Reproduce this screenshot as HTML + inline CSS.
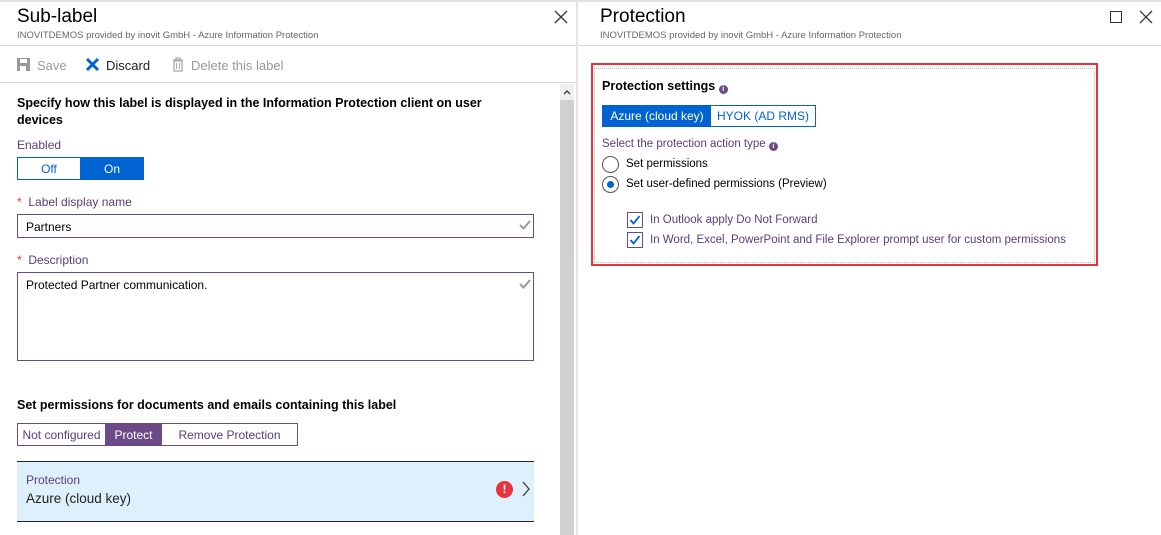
<!DOCTYPE html>
<html><head><meta charset="utf-8"><style>
*{box-sizing:border-box;margin:0;padding:0}
body{width:1161px;height:535px;overflow:hidden;background:#fff;font-family:"Liberation Sans",sans-serif;color:#000;position:relative}
.a{position:absolute;white-space:nowrap}
.pur{color:#5b3d78}
.i{display:inline-block;width:9px;height:9px;border-radius:50%;background:#6b4a87;color:#fff;font-size:7px;line-height:9px;text-align:center;font-weight:bold;vertical-align:-1px}
</style></head><body>
<div class="a" style="left:0;top:0;width:1161px;height:2px;background:#e4e4e4"></div>
<div class="a" style="left:17px;top:6px;font-size:19px">Sub-label</div>
<div class="a" style="left:17px;top:30px;font-size:9.5px;color:#666">INOVITDEMOS provided by inovit GmbH - Azure Information Protection</div>
<svg class="a" style="left:554px;top:10px" width="14" height="14"><path d="M1 1L13 13M13 1L1 13" stroke="#333" stroke-width="1.3"/></svg>
<div class="a" style="left:0;top:45px;width:577px;height:1px;background:#d8d8d8"></div>
<svg class="a" style="left:16px;top:57px" width="15" height="15"><path d="M1 1h13v13H1z" fill="#999"/><rect x="4" y="2" width="7" height="4" fill="#fff"/><rect x="4" y="9" width="6" height="5" fill="#fff"/></svg>
<div class="a" style="left:37px;top:58px;font-size:13px;color:#999">Save</div>
<svg class="a" style="left:85px;top:57px" width="15" height="15"><path d="M2 2L13 13M13 2L2 13" stroke="#0063d1" stroke-width="3"/></svg>
<div class="a" style="left:106px;top:58px;font-size:13px;color:#222">Discard</div>
<svg class="a" style="left:172px;top:57px" width="12" height="15"><path d="M1 3h10M4 3V1h4v2M2 4h8v10H2z" stroke="#aaa" fill="none" stroke-width="1.3"/><path d="M4.5 6v6M7.5 6v6" stroke="#aaa"/></svg>
<div class="a" style="left:191px;top:58px;font-size:13px;color:#999">Delete this label</div>
<div class="a" style="left:0;top:82px;width:577px;height:1px;background:#d8d8d8"></div>
<div class="a" style="left:560px;top:84px;width:14px;height:451px;background:#d0d0d0"></div>
<div class="a" style="left:560px;top:84px;width:14px;height:16px;background:#f0f0f0"></div>
<svg class="a" style="left:562px;top:88px" width="10" height="8"><path d="M2 6L5 3L8 6" stroke="#444" fill="none" stroke-width="1.5"/></svg>
<div class="a" style="left:576px;top:0;width:2px;height:535px;background:#e4e4e4"></div>
<div class="a" style="left:17px;top:95px;font-size:12.5px;font-weight:bold;line-height:17px;white-space:normal;width:500px">Specify how this label is displayed in the Information Protection client on user devices</div>
<div class="a pur" style="left:17px;top:138px;font-size:12px">Enabled</div>
<div class="a" style="left:17px;top:157px;width:127px;height:23px;border:1px solid #0063d1;font-size:12px">
<div class="a" style="left:0;top:0;width:62px;height:21px;color:#0063d1;text-align:center;line-height:22px">Off</div>
<div class="a" style="left:62px;top:0;width:64px;height:21px;background:#0063d1;color:#fff;text-align:center;line-height:22px">On</div></div>
<div class="a pur" style="left:17px;top:195px;font-size:12px"><span style="color:#e8323c">*</span>&nbsp; Label display name</div>
<div class="a" style="left:17px;top:214px;width:517px;height:24px;border:1px solid #6b4a87;font-size:12px;padding:5px 8px">Partners</div>
<svg class="a" style="left:519px;top:220px" width="12" height="10"><path d="M1 5l3.5 3.5L11 1" stroke="#999" fill="none" stroke-width="2"/></svg>
<div class="a pur" style="left:17px;top:253px;font-size:12px"><span style="color:#e8323c">*</span>&nbsp; Description</div>
<div class="a" style="left:17px;top:272px;width:517px;height:89px;border:1px solid #6b4a87;font-size:12px;padding:5px 8px">Protected Partner communication.</div>
<svg class="a" style="left:519px;top:279px" width="12" height="10"><path d="M1 5l3.5 3.5L11 1" stroke="#999" fill="none" stroke-width="2"/></svg>
<div class="a" style="left:17px;top:398px;font-size:12.5px;font-weight:bold">Set permissions for documents and emails containing this label</div>
<div class="a pur" style="left:17px;top:423px;width:281px;height:23px;border:1px solid #6b4a87;font-size:12px">
<div class="a" style="left:0;top:0;width:87px;height:21px;line-height:22px;text-align:center">Not configured</div>
<div class="a" style="left:87px;top:0;width:57px;height:21px;line-height:22px;text-align:center;background:#6b4a87;color:#fff">Protect</div>
<div class="a" style="left:144px;top:0;width:135px;height:21px;line-height:22px;text-align:center">Remove Protection</div></div>
<div class="a" style="left:17px;top:461px;width:517px;height:61px;background:#def0fb;border-top:1px solid #222;border-bottom:1px solid #222"></div>
<div class="a pur" style="left:26px;top:473px;font-size:12px">Protection</div>
<div class="a" style="left:26px;top:491px;font-size:13.5px;color:#222">Azure (cloud key)</div>
<div class="a" style="left:496px;top:481px;width:17px;height:17px;border-radius:50%;background:#e8323c;color:#fff;font-weight:bold;font-size:12px;text-align:center;line-height:17px">!</div>
<svg class="a" style="left:521px;top:481px" width="10" height="16"><path d="M2 1l6 7-6 7" stroke="#333" fill="none" stroke-width="1.2"/></svg>
<div class="a" style="left:600px;top:6px;font-size:19px">Protection</div>
<div class="a" style="left:600px;top:30px;font-size:9.5px;color:#666">INOVITDEMOS provided by inovit GmbH - Azure Information Protection</div>
<div class="a" style="left:1110px;top:11px;width:12px;height:12px;border:1.3px solid #333"></div>
<svg class="a" style="left:1139px;top:10px" width="14" height="14"><path d="M1 1L13 13M13 1L1 13" stroke="#333" stroke-width="1.3"/></svg>
<div class="a" style="left:578px;top:45px;width:583px;height:1px;background:#d8d8d8"></div>
<div class="a" style="left:591px;top:63px;width:507px;height:203px;border:2px solid #e8323c"></div>
<div class="a" style="left:594px;top:68px;width:501px;height:195px;border:1px dotted #bbb"></div>
<div class="a" style="left:602px;top:79px;font-size:12.5px;font-weight:bold">Protection settings <span class="i">i</span></div>
<div class="a" style="left:602px;top:105px;width:214px;height:22px;border:1px solid #0063d1;font-size:12px">
<div class="a" style="left:0;top:0;width:108px;height:20px;background:#0063d1;color:#fff;text-align:center;line-height:21px">Azure (cloud key)</div>
<div class="a" style="left:108px;top:0;width:104px;height:20px;color:#0063d1;text-align:center;line-height:21px">HYOK (AD RMS)</div></div>
<div class="a pur" style="left:602px;top:138px;font-size:11.5px">Select the protection action type <span class="i">i</span></div>
<div class="a" style="left:602px;top:156px;width:17px;height:17px;border-radius:50%;border:1px solid #555"></div>
<div class="a" style="left:626px;top:158px;font-size:11.5px">Set permissions</div>
<div class="a" style="left:602px;top:176px;width:17px;height:17px;border-radius:50%;border:1px solid #555"></div>
<div class="a" style="left:607px;top:181px;width:7px;height:7px;border-radius:50%;background:#0063d1"></div>
<div class="a" style="left:626px;top:178px;font-size:11.5px">Set user-defined permissions (Preview)</div>
<div class="a" style="left:627px;top:212px;width:16px;height:16px;border:1.5px solid #6b4a87"></div>
<svg class="a" style="left:629px;top:214px" width="12" height="12"><path d="M1.5 6l3 3.5L10.5 2" stroke="#0063d1" fill="none" stroke-width="1.8"/></svg>
<div class="a pur" style="left:650px;top:214px;font-size:11.5px">In Outlook apply Do Not Forward</div>
<div class="a" style="left:627px;top:232px;width:16px;height:16px;border:1.5px solid #6b4a87"></div>
<svg class="a" style="left:629px;top:234px" width="12" height="12"><path d="M1.5 6l3 3.5L10.5 2" stroke="#0063d1" fill="none" stroke-width="1.8"/></svg>
<div class="a pur" style="left:650px;top:234px;font-size:11.5px">In Word, Excel, PowerPoint and File Explorer prompt user for custom permissions</div>
</body></html>
